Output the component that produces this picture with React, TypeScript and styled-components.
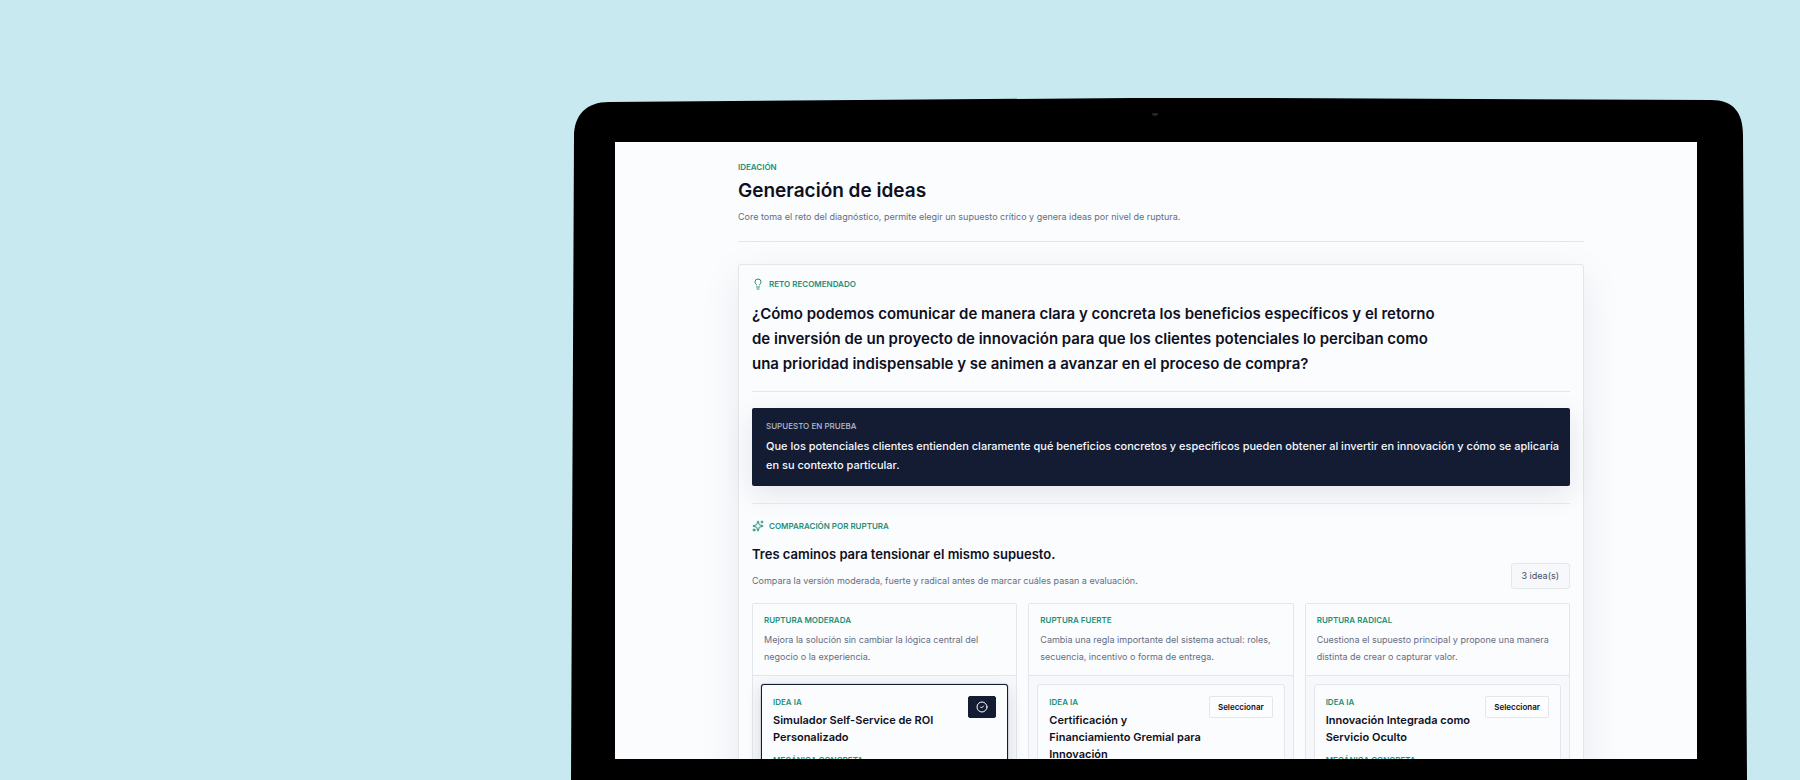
import React from "react";
import styled, { createGlobalStyle } from "styled-components";
import { CircleCheck, Lightbulb, Sparkles } from "lucide-react";

const color = {
  backdrop: "#c8e9ef",
  screen: "#fafcfe",
  ink: "#0e1022",
  navy: "#141c34",
  muted: "#666d82",
  green: "#1f8f78",
  line: "#e3e6ea",
};

const GlobalStyle = createGlobalStyle`
  *, *::before, *::after { box-sizing: border-box; }
  body {
    margin: 0;
    background: ${color.backdrop};
    font-family: Inter, "Liberation Sans", sans-serif;
    color: ${color.ink};
  }
  h1, h2, h3, h4, p { margin: 0; }
`;

const Hero = styled.div`
  display: grid;
  grid-template-columns: 571fr 1176fr 53fr;
  height: 100vh;
  padding-top: 97px;
  overflow: hidden;
`;

const Monitor = styled.div`
  grid-column: 2;
  position: relative;
  display: flex;
  min-width: 0;
  min-height: 0;
  padding: 45px 50px 21px 44px;
`;

const Casing = styled.svg`
  position: absolute;
  inset: 0;
  width: 100%;
  height: 100%;
`;

const Screen = styled.main`
  position: relative;
  flex: 1;
  min-width: 0;
  overflow: hidden;
  padding: 19px 113px 0 123px;
  background: ${color.screen};
`;

const PageHeader = styled.header`
  padding-bottom: 16px;
  margin-bottom: 22px;
  border-bottom: 1px solid ${color.line};
`;

const Eyebrow = styled.p<{ $tone?: string; $weight?: number }>`
  display: flex;
  align-items: center;
  gap: 5px;
  font-size: 8px;
  line-height: 12px;
  font-weight: ${(p) => p.$weight ?? 600};
  text-transform: uppercase;
  color: ${(p) => p.$tone ?? color.green};
`;

const PageTitle = styled.h1`
  margin: 4px 0 3px;
  font-size: 19px;
  line-height: 28px;
  font-weight: 600;
`;

const Muted = styled.p`
  font-size: 9px;
  line-height: 17px;
  color: ${color.muted};
`;

const Panel = styled.section`
  padding: 13px;
  border: 1px solid ${color.line};
  border-radius: 3px;
  background: #fbfcfe;
  box-shadow: 0 12px 40px rgba(20, 28, 52, 0.08);
`;

const Challenge = styled.div`
  padding-bottom: 15px;
  border-bottom: 1px solid ${color.line};
`;

const ChallengeText = styled.h2`
  max-width: 700px;
  margin-top: 11px;
  font-size: 15px;
  line-height: 25px;
  font-weight: 600;
`;

const Assumption = styled.div`
  margin: 16px 0 17px;
  padding: 12px 4px 11px 14px;
  border-radius: 2px;
  background: ${color.navy};
  box-shadow: 0 8px 28px rgba(20, 28, 52, 0.1);
`;

const AssumptionText = styled.p`
  margin-top: 5px;
  font-size: 11px;
  line-height: 19px;
  font-weight: 500;
  color: #f4f8fc;
`;

const Comparison = styled.div`
  padding-top: 16px;
  border-top: 1px solid ${color.line};
`;

const ComparisonHead = styled.div`
  display: flex;
  align-items: flex-end;
  justify-content: space-between;
  margin-bottom: 14px;
`;

const SectionTitle = styled.h3`
  margin: 12px 0 8px;
  font-size: 13px;
  line-height: 20px;
  font-weight: 600;
`;

const Count = styled.span`
  padding: 0 10px;
  border: 1px solid ${color.line};
  border-radius: 3px;
  background: #f6f8fb;
  font-size: 9px;
  line-height: 24px;
  color: #464c62;
`;

const Columns = styled.div`
  display: grid;
  grid-template-columns: repeat(3, minmax(0, 1fr));
  gap: 11px;
`;

const Column = styled.section`
  border: 1px solid ${color.line};
  border-radius: 2px;
  background: #f6f8fb;
`;

const ColumnHead = styled.header`
  display: flex;
  flex-direction: column;
  gap: 5px;
  padding: 10px 11px;
  border-bottom: 1px solid ${color.line};
  background: #fbfcfe;
`;

const IdeaCard = styled.article<{ $selected?: boolean }>`
  margin: 8px;
  padding: 11px;
  min-height: 180px;
  border: 1px solid ${(p) => (p.$selected ? color.navy : color.line)};
  border-radius: 3px;
  background: #fbfcfe;
  box-shadow: ${(p) =>
    p.$selected ? "0 0 1px #141c34, 0 6px 16px rgba(20, 28, 52, 0.14)" : "none"};
`;

const IdeaTop = styled.div`
  display: flex;
  align-items: flex-start;
  justify-content: space-between;
  gap: 8px;
  margin-bottom: 8px;
`;

const IdeaTitle = styled.h4`
  margin-top: 4px;
  font-size: 11px;
  line-height: 17px;
  font-weight: 600;
`;

const SelectButton = styled.button<{ $selected?: boolean }>`
  display: flex;
  align-items: center;
  justify-content: center;
  flex: none;
  height: 22px;
  padding: 0 ${(p) => (p.$selected ? 7 : 8)}px;
  border: 1px solid ${(p) => (p.$selected ? color.navy : color.line)};
  border-radius: 2px;
  background: ${(p) => (p.$selected ? color.navy : "#fcfdfe")};
  color: ${(p) => (p.$selected ? "#ffffff" : color.ink)};
  font: 600 8px/12px Inter, "Liberation Sans", sans-serif;
`;

type Idea = {
  level: string;
  summary: string;
  title: string;
  selected?: boolean;
};

const ideas: Idea[] = [
  {
    level: "Ruptura moderada",
    summary: "Mejora la solución sin cambiar la lógica central del negocio o la experiencia.",
    title: "Simulador Self-Service de ROI Personalizado",
    selected: true,
  },
  {
    level: "Ruptura fuerte",
    summary: "Cambia una regla importante del sistema actual: roles, secuencia, incentivo o forma de entrega.",
    title: "Certificación y Financiamiento Gremial para Innovación",
  },
  {
    level: "Ruptura radical",
    summary: "Cuestiona el supuesto principal y propone una manera distinta de crear o capturar valor.",
    title: "Innovación Integrada como Servicio Oculto",
  },
];

export default function App() {
  return (
    <>
      <GlobalStyle />
      <Hero>
        <Monitor>
          <Casing viewBox="0 0 1176 683" preserveAspectRatio="none" aria-hidden="true">
            <path
              d="M0 683 L3 40 C3 18 15 5 38 5 L560 1 L700 1 L1140 3 C1162 3 1172 15 1172 38 L1176 683 Z"
              fill="#000"
            />
            <path d="M581 16 h6 a3 3 0 0 1 -6 0 Z" fill="#24272a" />
          </Casing>
          <Screen>
            <PageHeader>
              <Eyebrow>Ideación</Eyebrow>
              <PageTitle>Generación de ideas</PageTitle>
              <Muted>
                Core toma el reto del diagnóstico, permite elegir un supuesto crítico y genera ideas
                por nivel de ruptura.
              </Muted>
            </PageHeader>
            <Panel>
              <Challenge>
                <Eyebrow>
                  <Lightbulb size={12} />
                  Reto recomendado
                </Eyebrow>
                <ChallengeText>
                  ¿Cómo podemos comunicar de manera clara y concreta los beneficios específicos y el
                  retorno de inversión de un proyecto de innovación para que los clientes
                  potenciales lo perciban como una prioridad indispensable y se animen a avanzar en
                  el proceso de compra?
                </ChallengeText>
              </Challenge>
              <Assumption>
                <Eyebrow $tone="#b4bccb" $weight={500}>
                  Supuesto en prueba
                </Eyebrow>
                <AssumptionText>
                  Que los potenciales clientes entienden claramente qué beneficios concretos y
                  específicos pueden obtener al invertir en innovación y cómo se aplicaría en su
                  contexto particular.
                </AssumptionText>
              </Assumption>
              <Comparison>
                <ComparisonHead>
                  <div>
                    <Eyebrow>
                      <Sparkles size={12} />
                      Comparación por ruptura
                    </Eyebrow>
                    <SectionTitle>Tres caminos para tensionar el mismo supuesto.</SectionTitle>
                    <Muted>
                      Compara la versión moderada, fuerte y radical antes de marcar cuáles pasan a
                      evaluación.
                    </Muted>
                  </div>
                  <Count>3 idea(s)</Count>
                </ComparisonHead>
                <Columns>
                  {ideas.map((idea) => (
                    <Column key={idea.level}>
                      <ColumnHead>
                        <Eyebrow>{idea.level}</Eyebrow>
                        <Muted>{idea.summary}</Muted>
                      </ColumnHead>
                      <IdeaCard $selected={idea.selected}>
                        <IdeaTop>
                          <div>
                            <Eyebrow>Idea IA</Eyebrow>
                            <IdeaTitle>{idea.title}</IdeaTitle>
                          </div>
                          <SelectButton
                            type="button"
                            $selected={idea.selected}
                            aria-pressed={!!idea.selected}
                            aria-label={idea.selected ? "Idea seleccionada" : undefined}
                          >
                            {idea.selected ? <CircleCheck size={12} /> : "Seleccionar"}
                          </SelectButton>
                        </IdeaTop>
                        <Eyebrow>Mecánica concreta</Eyebrow>
                      </IdeaCard>
                    </Column>
                  ))}
                </Columns>
              </Comparison>
            </Panel>
          </Screen>
        </Monitor>
      </Hero>
    </>
  );
}
